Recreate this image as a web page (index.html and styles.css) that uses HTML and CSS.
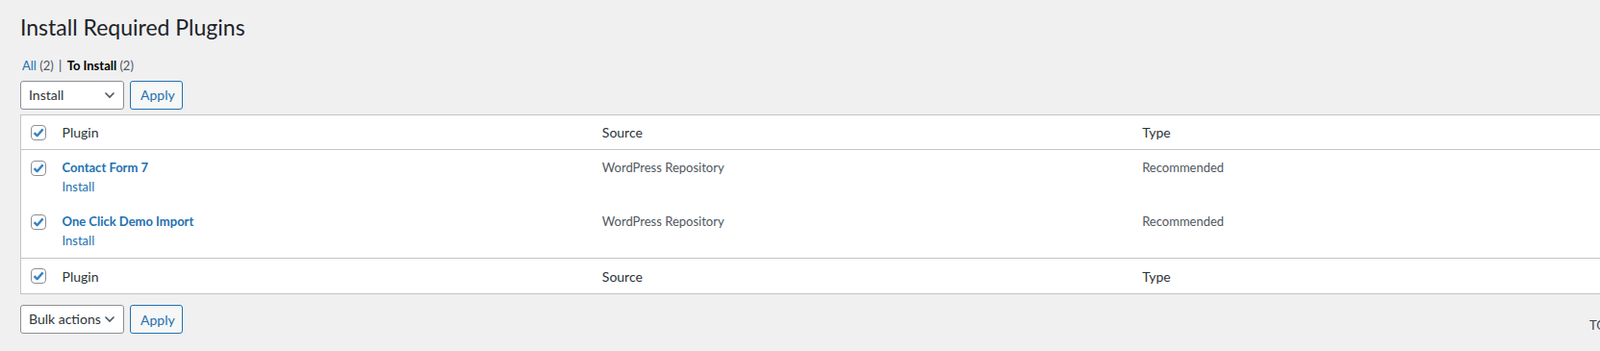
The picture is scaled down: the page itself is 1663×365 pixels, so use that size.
FILE: index.html
```html
<!DOCTYPE html>
<html lang="en">
<head>
    <meta charset="UTF-8">
    <title>Install Required Plugins</title>
    <link rel="stylesheet" href="styles.css">
</head>
<body>

<div class="page">
    <div class="wrap">
        <h1>Install Required Plugins</h1>

        <ul class="subsubsub">
            <li><a href="#">All <span class="count">(2)</span></a> <span class="sep">|</span> </li>
            <li><a href="#" class="current">To Install <span class="count">(2)</span></a></li>
        </ul>

        <div class="tablenav top">
            <div class="select">
                <span>Install</span>
                <svg class="chevron" width="12" height="8" viewBox="0 0 12 8"><path d="M1.5 1.5 L6 6 L10.5 1.5" fill="none" stroke="#50575e" stroke-width="1.6"/></svg>
            </div>
            <button class="button">Apply</button>
        </div>

        <table class="list-table">
            <colgroup>
                <col class="col-check">
                <col class="col-wide">
                <col class="col-wide">
                <col class="col-wide">
            </colgroup>
            <thead>
                <tr>
                    <td class="check-column"><span class="cb"><svg width="14" height="14" viewBox="0 0 14 14"><path d="M2.6 7.2 L5.6 10.2 L11.6 3.4" fill="none" stroke="#3582c4" stroke-width="2.4" stroke-linejoin="round"/></svg></span></td>
                    <th>Plugin</th>
                    <th>Source</th>
                    <th>Type</th>
                </tr>
            </thead>
            <tbody>
                <tr>
                    <td class="check-column"><span class="cb"><svg width="14" height="14" viewBox="0 0 14 14"><path d="M2.6 7.2 L5.6 10.2 L11.6 3.4" fill="none" stroke="#3582c4" stroke-width="2.4" stroke-linejoin="round"/></svg></span></td>
                    <td>
                        <div><a href="#" class="plugin-name">Contact Form 7</a></div>
                        <div class="row-actions"><a href="#">Install</a></div>
                    </td>
                    <td>WordPress Repository</td>
                    <td>Recommended</td>
                </tr>
                <tr>
                    <td class="check-column"><span class="cb"><svg width="14" height="14" viewBox="0 0 14 14"><path d="M2.6 7.2 L5.6 10.2 L11.6 3.4" fill="none" stroke="#3582c4" stroke-width="2.4" stroke-linejoin="round"/></svg></span></td>
                    <td>
                        <div><a href="#" class="plugin-name">One Click Demo Import</a></div>
                        <div class="row-actions"><a href="#">Install</a></div>
                    </td>
                    <td>WordPress Repository</td>
                    <td>Recommended</td>
                </tr>
            </tbody>
            <tfoot>
                <tr>
                    <td class="check-column"><span class="cb"><svg width="14" height="14" viewBox="0 0 14 14"><path d="M2.6 7.2 L5.6 10.2 L11.6 3.4" fill="none" stroke="#3582c4" stroke-width="2.4" stroke-linejoin="round"/></svg></span></td>
                    <th>Plugin</th>
                    <th>Source</th>
                    <th>Type</th>
                </tr>
            </tfoot>
        </table>

        <div class="tablenav bottom">
            <div class="select">
                <span>Bulk actions</span>
                <svg class="chevron" width="12" height="8" viewBox="0 0 12 8"><path d="M1.5 1.5 L6 6 L10.5 1.5" fill="none" stroke="#50575e" stroke-width="1.6"/></svg>
            </div>
            <button class="button">Apply</button>
        </div>
    </div>

    <div class="footer">
        <span class="version">TGMPA v2.6.1</span>
    </div>
</div>

</body>
</html>
```

FILE: styles.css
```css
html, body {
    margin:  0;
    padding: 0;
    overflow: hidden;
}
body {
    background: #f0f0f1;
    color: #3c434a;
    font-family: Lato, "Noto Sans", sans-serif;
    font-size: 13px;
    line-height: 1.4;
}
a {
    color: #2271b1;
    text-decoration: none;
}

.page {
    position: relative;
    width: 1760px;
    height: 365px;
}
.wrap {
    padding: 9px 0 0 21px;
}

h1 {
    margin: 0;
    padding: 5px 0 4px;
    font-size: 23px;
    font-weight: 400;
    line-height: 1.3;
    color: #1d2327;
}

ul.subsubsub {
    display: flex;
    list-style: none;
    margin: 7px 0 0;
    padding: 0 0 0 2px;
    color: #646970;
    line-height: 2;
}
ul.subsubsub li {
    white-space: pre;
}
ul.subsubsub .sep {
    padding: 0 2px;
    color: #3c434a;
}
ul.subsubsub a.current {
    color: #000;
    font-weight: 700;
}
ul.subsubsub .count {
    color: #50575e;
    font-weight: 400;
}

.tablenav {
    display: flex;
    gap: 6px;
    height: 30px;
}
.tablenav.top {
    margin: 3px 0 5px;
}
.tablenav.bottom {
    margin: 11px 0 0;
}

.select {
    box-sizing: border-box;
    width: 108px;
    height: 30px;
    display: flex;
    align-items: center;
    justify-content: space-between;
    gap: 2px;
    padding: 0 8px 0 8px;
    background: #fff;
    border: 1px solid #8c8f94;
    border-radius: 3px;
    color: #2c3338;
    font-size: 14px;
    white-space: nowrap;
}
.button {
    box-sizing: border-box;
    height: 30px;
    width: 55px;
    padding: 0 10px;
    background: #f6f7f7;
    border: 1px solid #2271b1;
    border-radius: 3px;
    color: #2271b1;
    font-family: inherit;
    font-size: 14px;
}

table.list-table {
    table-layout: fixed;
    width: 1718px;
    border-collapse: collapse;
    border: 1px solid #c3c4c7;
    background: #fff;
}
col.col-check {
    width: 33px;
}
col.col-wide {
    width: 561px;
}
.list-table th, .list-table td {
    padding: 8px 10px;
    text-align: left;
    vertical-align: top;
    line-height: 1.5;
}
.list-table th {
    font-weight: 400;
    color: #2c3338;
    font-size: 14px;
    line-height: 1.3;
}
.list-table thead tr {
    border-bottom: 1px solid #c3c4c7;
}
.list-table tfoot tr {
    border-top: 1px solid #c3c4c7;
}
.list-table thead th {
    padding: 9px 10px 8px;
}
.list-table tfoot th {
    padding: 10px 10px 8px;
}
.list-table tbody td {
    color: #50575e;
    padding: 9px 10px 8px;
}
.list-table td.check-column {
    padding: 11px 0 0 10px;
}
.list-table thead td.check-column,
.list-table tfoot td.check-column {
    padding: 10px 0 0 10px;
}

.cb {
    box-sizing: border-box;
    display: flex;
    align-items: center;
    justify-content: center;
    width: 16px;
    height: 16px;
    background: #fff;
    border: 1px solid #8c8f94;
    border-radius: 4px;
}

a.plugin-name {
    font-weight: 700;
}

.footer {
    position: absolute;
    left: 1652px;
    bottom: 18px;
    color: #3c434a;
    white-space: nowrap;
}
```
